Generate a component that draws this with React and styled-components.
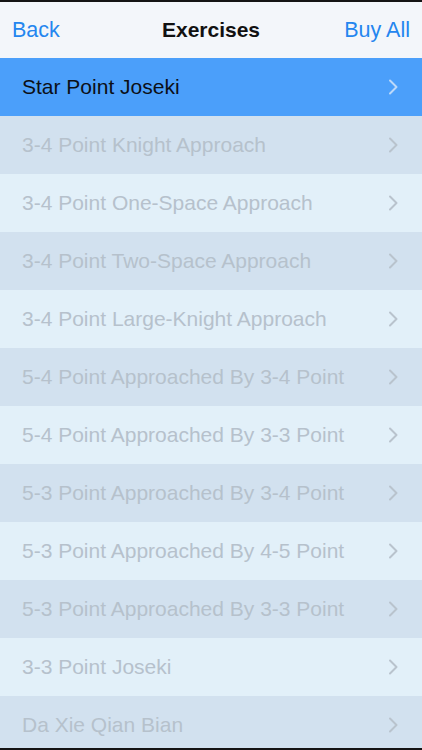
import React from "react";
import styled, { createGlobalStyle } from "styled-components";

const exercises = [
  { id: "star", name: "Star Point Joseki", unlocked: true },
  { id: "34-knight", name: "3-4 Point Knight Approach" },
  { id: "34-one", name: "3-4 Point One-Space Approach" },
  { id: "34-two", name: "3-4 Point Two-Space Approach" },
  { id: "34-large", name: "3-4 Point Large-Knight Approach" },
  { id: "54-34", name: "5-4 Point Approached By 3-4 Point" },
  { id: "54-33", name: "5-4 Point Approached By 3-3 Point" },
  { id: "53-34", name: "5-3 Point Approached By 3-4 Point" },
  { id: "53-45", name: "5-3 Point Approached By 4-5 Point" },
  { id: "53-33", name: "5-3 Point Approached By 3-3 Point" },
  { id: "33", name: "3-3 Point Joseki" },
  { id: "daxie", name: "Da Xie Qian Bian" },
];

const GlobalStyle = createGlobalStyle`
  html, body {
    margin: 0;
    padding: 0;
    background: #141414;
  }
  body {
    font-family: "Liberation Sans", Arial, sans-serif;
  }
`;

const Chevron = ({ color }) => (
  <svg width="10" height="16" viewBox="0 0 10 16">
    <path
      d="M2 1.5 L8.5 8 L2 14.5"
      fill="none"
      stroke={color}
      strokeWidth="2"
      strokeLinecap="round"
      strokeLinejoin="round"
    />
  </svg>
);

const App = () => {
  return (
    <Screen>
      <GlobalStyle />
      <NavBar>
        <NavButton>Back</NavButton>
        <Title>Exercises</Title>
        <NavButton>Buy All</NavButton>
      </NavBar>
      <List>
        {exercises.map((ex, i) => {
          const tone = ex.unlocked ? "active" : i % 2 === 1 ? "dark" : "light";
          return (
            <Row key={ex.id} $tone={tone}>
              <Label $active={ex.unlocked}>{ex.name}</Label>
              <Chevron color={ex.unlocked ? "rgba(225,236,250,0.75)" : "#b9c3cd"} />
            </Row>
          );
        })}
      </List>
    </Screen>
  );
};

const rowColors = {
  active: "#4b9ffa",
  dark: "#d2e1ef",
  light: "#e2f0f9",
};

const Screen = styled.div`
  height: 100vh;
  box-sizing: border-box;
  border-top: 2px solid #141414;
  border-bottom: 2px solid #141414;
  display: flex;
  flex-direction: column;
  overflow: hidden;
`;

const NavBar = styled.div`
  height: 56px;
  flex-shrink: 0;
  background: #f3f6fa;
  display: flex;
  align-items: center;
  justify-content: space-between;
  padding: 0 12px;
  position: relative;
`;

const NavButton = styled.span`
  font-size: 21.5px;
  color: #2486ef;
`;

const Title = styled.span`
  position: absolute;
  left: 0;
  right: 0;
  text-align: center;
  font-size: 21px;
  font-weight: bold;
  color: #111;
  pointer-events: none;
`;

const List = styled.div`
  flex: 1;
  overflow: hidden;
  display: flex;
  flex-direction: column;
`;

const Row = styled.div`
  height: 58px;
  flex-shrink: 0;
  box-sizing: border-box;
  background: ${(p) => rowColors[p.$tone]};
  display: flex;
  align-items: center;
  justify-content: space-between;
  padding: 0 24px 0 22px;
`;

const Label = styled.span`
  font-size: 21px;
  color: ${(p) => (p.$active ? "#0b0f16" : "#b6c1cc")};
`;

export default App;
